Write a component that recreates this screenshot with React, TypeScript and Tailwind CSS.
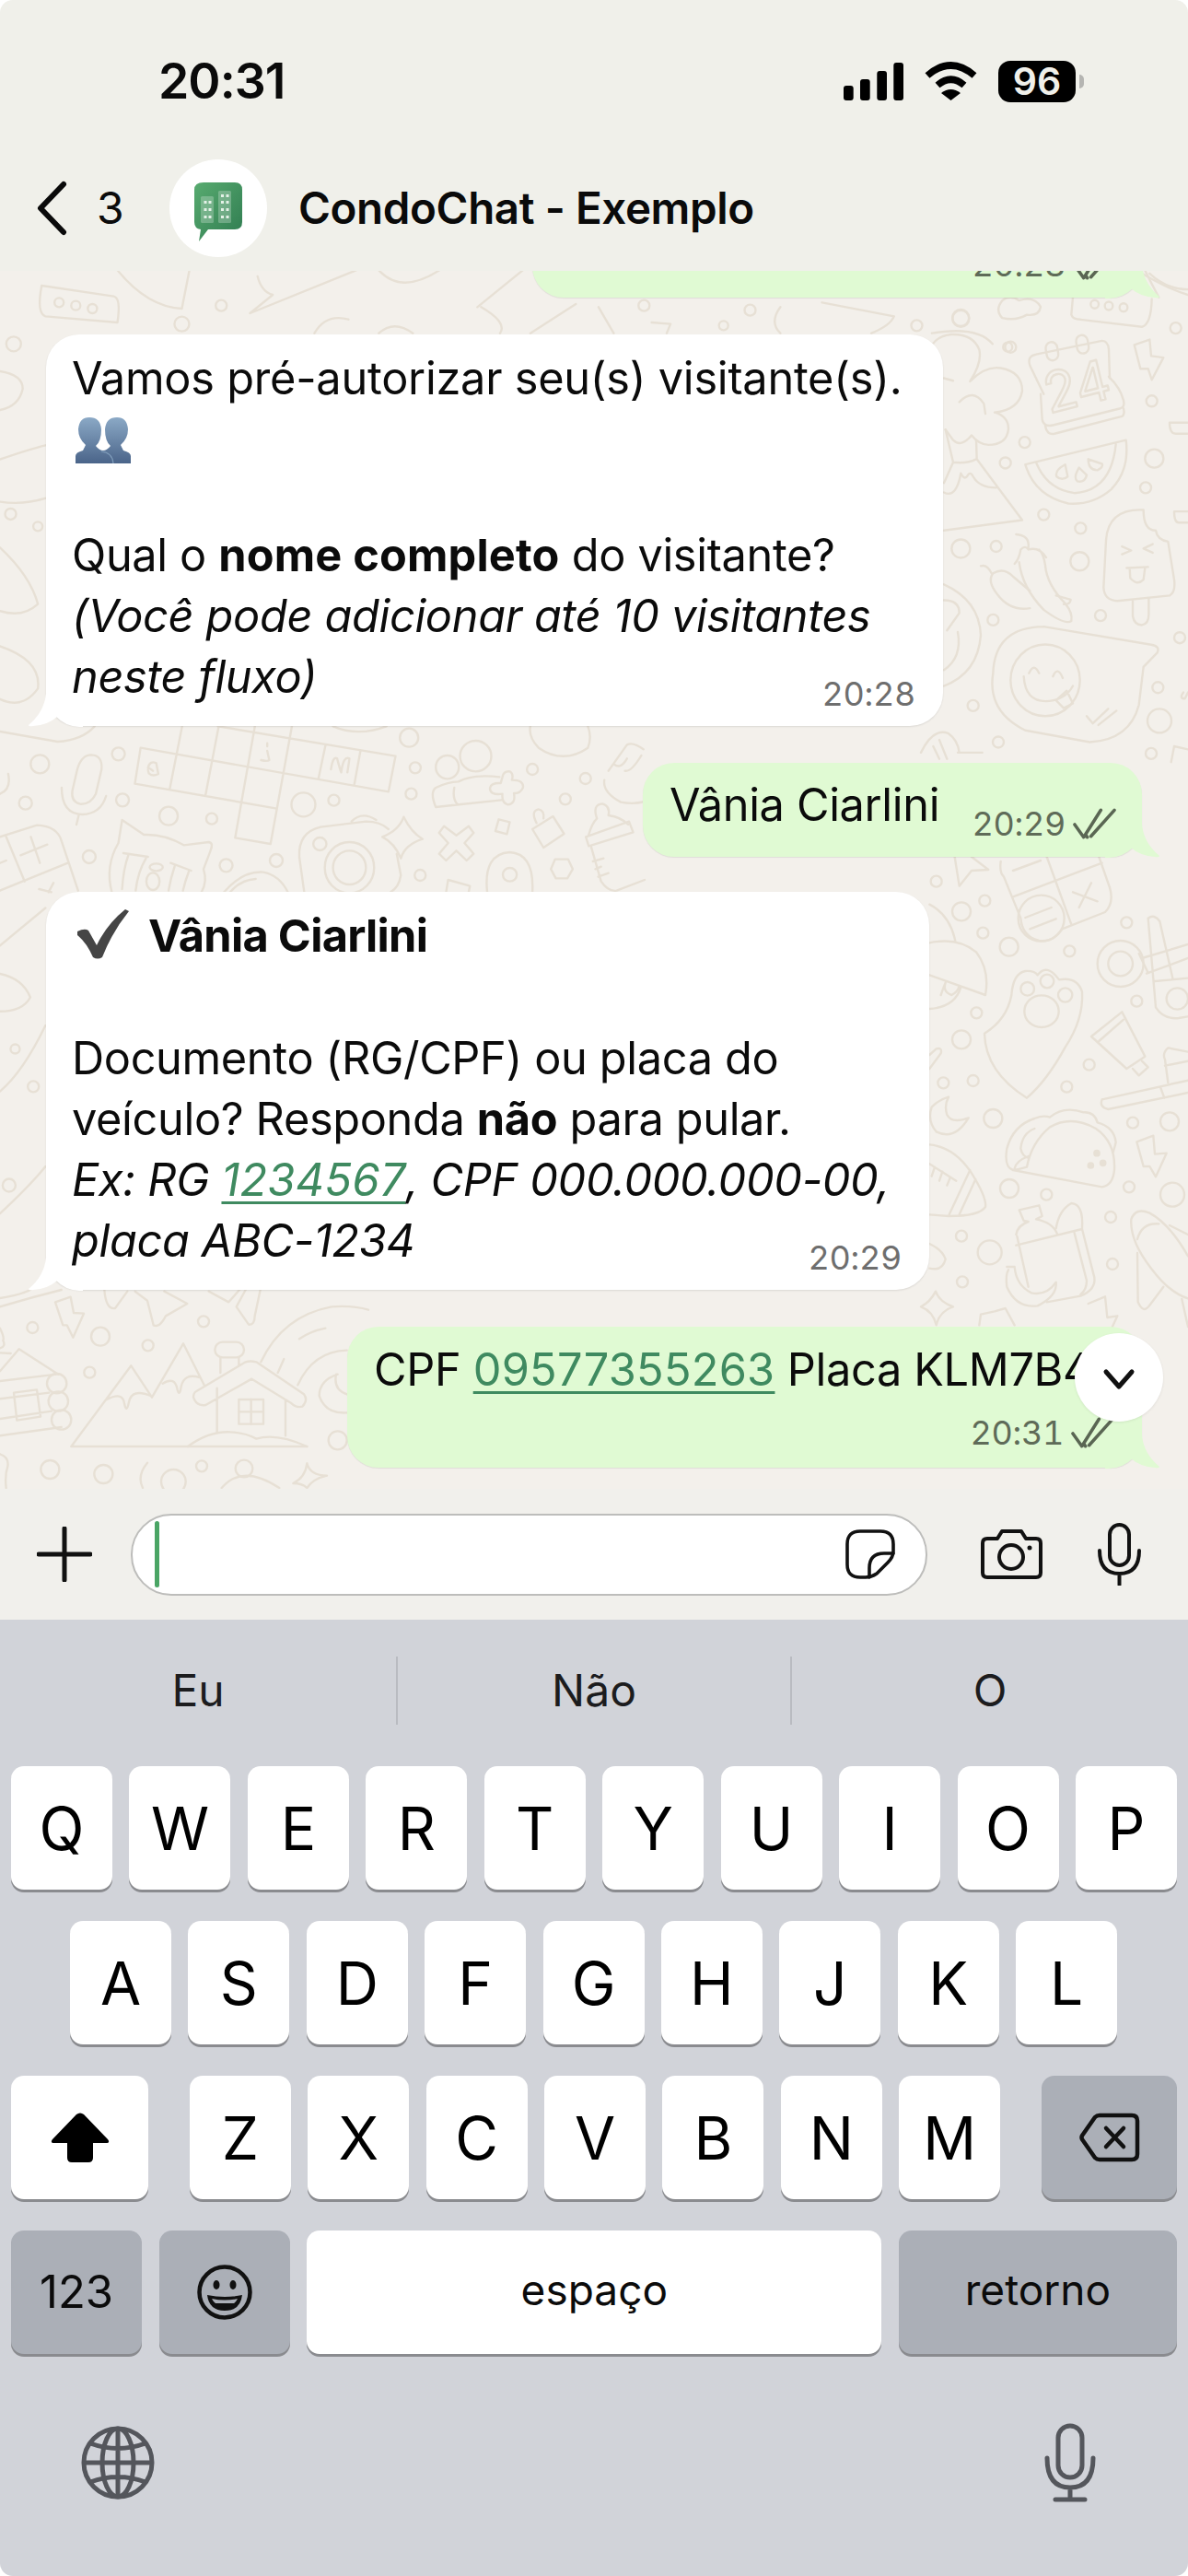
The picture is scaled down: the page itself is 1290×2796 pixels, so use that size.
import type { ReactNode } from "react";

type Dot = [number, number, number];

function Zone({
  ox,
  oy,
  sx,
  sy,
  dots = [],
  children,
}: {
  ox: number;
  oy: number;
  sx: number;
  sy: number;
  dots?: Dot[];
  children?: ReactNode;
}) {
  return (
    <>
      <g transform={`translate(${ox} ${oy}) scale(${1 / sx} ${1 / sy})`}>{children}</g>
      {dots.map(([x, y, r]) => (
        <circle key={`${ox}-${oy}-${x}-${y}`} cx={ox + x / sx} cy={oy + y / sy} r={r} />
      ))}
    </>
  );
}

function Doodles() {
  return (
    <svg
      viewBox="0 294 1290 1322"
      className="absolute inset-0 h-full w-full fill-none stroke-[#e7e0d5] stroke-[2.4] [&_*]:[vector-effect:non-scaling-stroke]"
      strokeLinecap="round"
      strokeLinejoin="round"
      aria-hidden="true"
    >
      {/* top strip */}
      <Zone ox={0} oy={0} sx={1.2155} sy={3} dots={[[78, 985, 5], [100, 995, 5], [122, 1005, 5], [292, 995, 6], [240, 1055, 8], [18, 1120, 8], [850, 995, 6], [990, 1010, 6], [1268, 1035, 9], [1210, 1060, 6], [955, 1060, 5], [1330, 1130, 5]]}>
        <path d="M55 930 L150 965 Q160 970 155 1050 L60 1030 Q48 1020 55 930" />
        <path d="M155 880 Q195 1000 240 1005 L250 880 M340 900 Q345 950 360 960 L330 1020 L470 880 M500 880 Q530 960 580 880" />
        <path d="M630 1000 L690 880 M635 1000 Q670 1050 660 1085 M700 1085 L760 990 M790 1000 L810 1085 M1030 1000 Q1015 1050 1030 1085 M1085 985 L1180 1030 Q1175 1060 1150 1085" />
        <path d="M415 1085 Q430 1020 460 1040 M500 1085 Q520 1040 545 1085 M860 1050 L885 1055 L880 1085 M1230 1085 Q1290 1060 1310 1120 M1500 880 Q1540 940 1568 960" />
      </Zone>

      {/* right of first bubble */}
      <Zone
        ox={1000}
        oy={290}
        sx={3}
        sy={2.904}
        dots={[[130, 162, 9], [292, 252, 6], [830, 192, 6], [338, 552, 6], [275, 617, 6], [752, 422, 6], [760, 603, 10], [732, 695, 6], [400, 780, 6], [520, 823, 6], [130, 887, 10], [245, 880, 6], [517, 927, 10], [585, 1098, 6], [235, 1112, 6], [843, 1168, 6], [772, 1325, 6], [777, 1430, 13], [170, 1382, 6], [252, 1497, 6], [750, 1533, 6]]}
      >
        <path d="M265 105 Q290 85 320 105 Q370 90 390 125 Q385 155 345 150 Q310 170 265 160 Q240 135 265 105" />
        <path d="M495 95 L490 150 Q495 165 520 165 L720 188 Q750 180 752 100" />
        <circle cx="566" cy="117" r="13" />
        <circle cx="612" cy="122" r="13" />
        <circle cx="660" cy="127" r="13" />
        <path d="M400 400 L355 310 Q345 280 375 275 L590 232 Q610 232 612 260 L615 350" />
        <path d="M390 400 L395 480 Q400 505 430 498 L650 445 Q665 440 660 420 Q650 380 612 345 M405 500 Q410 530 435 525 L655 470 Q665 465 660 445" />
        <rect x="408" y="236" width="38" height="58" rx="19" transform="rotate(-10 427 265)" />
        <rect x="507" y="214" width="38" height="58" rx="19" transform="rotate(-10 526 243)" />
        <text x="405" y="440" fontSize="175" fontFamily="Inter, sans-serif" transform="rotate(-14 500 400)">24</text>
        <path d="M695 245 L745 228 L750 280 L790 285 L752 355 L740 320 L715 320 Z" />
        <path d="M340 622 L668 545 Q680 640 620 700 Q560 750 480 745 Q370 720 340 622 Z M375 615 Q410 700 500 712 Q620 705 635 558" />
        <path d="M470 622 Q435 640 442 660 Q460 675 478 660 Z M515 632 Q495 665 510 675 Q535 680 540 655 Z M545 605 Q545 640 575 640 Q595 630 590 620 Z" />
        <path d="M725 765 Q610 760 603 860 L595 1010 Q597 1050 640 1052 L810 1035 Q830 1025 825 985 L805 865 Q770 860 765 830 Q725 830 725 765" />
        <path d="M690 1052 L690 1100 Q695 1128 720 1128 Q742 1125 742 1095 L742 1045 M655 880 L685 893 L655 905 M755 873 L725 887 L755 900 M670 948 L740 945 M680 950 L682 980 Q705 1005 725 985 L730 948" />
        <path d="M320 930 Q330 1010 400 1080 Q470 1130 490 1115 Q495 1090 470 1060 Q410 1000 405 940 Q400 905 385 890 M305 935 Q320 920 325 890 Q340 875 350 890 Q385 880 408 915 M350 885 Q355 845 310 842" />
        <path d="M355 1075 Q290 1085 248 1030 Q215 990 235 965 Q270 945 300 975 L355 1020 M230 965 Q215 935 195 942 M440 1035 L488 1048 Q485 1065 465 1062" />
        <path d="M400 1133 Q240 1135 235 1280 Q215 1400 340 1460 L550 1497 Q680 1490 710 1380 L725 1260 L770 1215 Q780 1195 750 1190 L400 1133" />
        <circle cx="405" cy="1302" r="113" />
        <path d="M335 1290 Q340 1370 410 1368 Q470 1365 495 1320 M352 1280 Q368 1245 385 1280 M430 1290 Q445 1255 462 1295 M440 1365 L475 1335 L495 1375 L465 1390 Z" />
        <path d="M540 1415 L560 1438 L610 1392 M578 1443 L637 1398" />
        <path d="M80 512 L105 615 L75 680 M180 545 L182 605 L330 797 L75 830 M105 615 Q150 620 180 605 M130 650 Q140 670 150 660 Q160 640 170 660 Q190 695 245 695 M75 710 Q115 730 130 650" />
        <path d="M160 360 Q200 300 190 260 Q170 210 100 212 Q60 215 40 240 M160 360 Q210 310 260 318 Q330 330 330 390 Q320 450 240 458 Q285 470 285 510 Q280 560 220 560 Q190 560 165 530 Q130 570 105 545 L80 512 M125 425 Q170 380 205 430 L210 462 M75 350 L105 358" />
        <path d="M75 1000 Q190 1050 195 1160 Q185 1280 75 1320 M75 1050 Q125 1050 125 1090 L85 1145 M120 1150 Q135 1230 75 1270" />
        <path d="M0 1530 Q40 1450 90 1470 Q120 1490 125 1530 M40 1510 L60 1550 M60 1490 L85 1550 M120 1530 L200 1530 M815 1560 L825 1510 L870 1520 M855 1340 Q840 1360 860 1360 L870 1340" />
        <path d="M810 490 Q810 525 830 525 L870 525 M810 490 L870 490 M825 770 Q825 805 840 805 L870 805 M825 770 L870 770 M730 10 Q750 50 775 95 M745 20 Q800 70 870 70" />
      </Zone>

      {/* band under first bubble */}
      <Zone
        ox={0}
        oy={780}
        sx={2.24}
        sy={3}
        dots={[[97, 148, 10], [288, 115, 7], [62, 275, 7], [298, 265, 7], [410, 317, 10], [515, 326, 6], [217, 450, 7], [550, 478, 7], [672, 462, 7], [995, 62, 10], [1010, 160, 6], [1000, 245, 6], [738, 280, 13], [812, 266, 6], [1295, 165, 6], [1424, 195, 6], [1375, 262, 6], [1022, 510, 6]]}
      >
        <path d="M530 25 L962 122 M342 95 L945 238 M328 212 L670 292 M572 388 L658 408 M342 95 L328 212 M443 25 L413 228 M532 25 L500 248 M620 25 L572 388 M710 25 L658 408 M792 85 L775 193 M877 103 L862 213 M962 122 L945 238" />
        <path d="M372 170 Q355 150 362 178 Q372 190 385 180 L380 145 Q365 135 360 160 M650 80 L650 90 M650 105 L655 135 Q650 140 635 135 M805 165 Q810 120 820 130 Q828 170 830 175 Q835 120 850 130 L845 175" />
        <path d="M188 165 Q198 118 222 118 Q250 120 247 165 L233 245 Q220 280 195 278 Q172 270 176 235 Z M150 225 Q150 310 200 312 Q245 310 258 252 M192 312 L186 345" />
        <path d="M288 405 L297 330 L350 378 Q400 375 447 412 L508 402 Q520 405 512 430 L495 490 Q505 530 490 565 M288 405 Q255 480 272 565 M300 438 L360 450 M415 470 L465 495 M312 445 Q300 490 297 555 M355 455 Q335 500 330 560 M425 480 Q415 520 410 560 M460 495 Q450 530 445 560" />
        <ellipse cx="372" cy="530" rx="16" ry="28" />
        <ellipse cx="380" cy="484" rx="16" ry="12" />
        <path d="M0 385 L90 347 Q140 350 150 400 L190 560 M15 385 L60 530 M0 560 L165 470 M50 445 L115 410 M75 385 L97 470 M95 555 L125 565 M130 535 L118 565 M0 470 L15 462" />
        <path d="M545 565 Q590 495 640 500 Q680 510 700 565 M560 565 Q585 525 622 522" />
        <path d="M740 565 L728 450 Q725 370 780 353 L890 335 Q925 335 945 360 M965 440 L975 510 Q970 550 950 565 M855 335 Q880 300 915 330" />
        <ellipse cx="850" cy="485" rx="60" ry="83" />
        <ellipse cx="850" cy="485" rx="40" ry="55" />
        <ellipse cx="778" cy="408" rx="16" ry="21" />
        <path d="M982 320 Q1000 370 1028 392 Q985 410 975 455 Q960 405 930 385 Q970 365 982 320 Z" />
        <path d="M1080 350 L1110 380 L1140 350 L1152 372 L1130 405 L1152 440 L1135 462 L1110 430 L1085 462 L1068 440 L1090 405 L1068 372 Z" />
        <path d="M1213 328 L1240 337 L1233 376 L1205 366 Z M1295 360 L1345 318 L1372 375 L1322 420 Z M1305 340 Q1290 300 1310 295 Q1325 300 1322 325" />
        <path d="M1425 385 L1530 335 L1540 370 L1432 415 Z M1432 378 Q1440 340 1452 325 Q1440 280 1465 277 Q1485 285 1480 315 Q1510 320 1528 345 M1438 418 L1462 530 Q1480 565 1500 560 L1568 525 M1442 465 L1468 455 M1448 490 L1462 482 M1455 515 L1480 503" />
        <path d="M1185 565 Q1175 440 1240 435 Q1300 440 1295 565 M1350 458 L1382 458 L1393 490 L1380 520 L1352 520 L1340 490 Z M1090 525 L1143 545 L1140 565 M1090 525 L1085 565" />
        <ellipse cx="1240" cy="508" rx="17" ry="22" />
        <ellipse cx="1088" cy="158" rx="28" ry="38" />
        <ellipse cx="1157" cy="122" rx="38" ry="50" />
        <path d="M1060 288 Q1045 240 1060 225 Q1090 205 1115 205 Q1150 180 1215 190 M1105 225 Q1100 260 1112 278 M1060 288 L1220 265 M1222 190 Q1225 170 1240 172 Q1250 180 1245 200 Q1275 200 1272 225 Q1265 245 1250 243 Q1255 278 1235 280 Q1220 275 1222 245 Q1190 250 1192 225 Q1195 208 1218 210 Z" />
        <path d="M1480 170 L1525 85 Q1540 75 1565 100 M1470 200 Q1465 240 1510 272 Q1540 280 1568 270 M1495 150 Q1510 165 1525 130 M1520 170 Q1535 175 1560 120 M1290 25 Q1285 60 1310 95 Q1370 150 1430 95 Q1440 60 1430 25 M0 42 L140 75 Q200 70 230 25 M20 180 Q28 230 0 245 M810 25 Q870 60 940 25" />
      </Zone>

      {/* right of second white bubble */}
      <Zone
        ox={1000}
        oy={930}
        sx={3}
        sy={3}
        dots={[[50, 80, 6], [132, 178, 10], [208, 143, 6], [202, 248, 6], [287, 293, 10], [484, 307, 6], [670, 214, 6], [703, 470, 6], [181, 508, 6], [132, 595, 10], [548, 677, 6], [475, 749, 6], [73, 736, 6], [170, 729, 6], [235, 852, 10], [690, 866, 6], [810, 862, 10], [288, 1080, 10], [409, 1100, 6], [678, 1075, 6], [819, 1100, 13], [618, 1173, 6], [132, 1235, 6], [224, 1288, 13], [135, 1384, 6], [624, 1326, 6]]}
      >
        <path d="M260 15 Q255 50 270 65 L325 200 Q330 260 385 273 Q430 280 460 235 L600 180 Q630 150 615 100 L580 0 M300 130 L590 20 M410 0 L490 220 M300 45 L390 12 M495 115 L575 145 M555 85 L515 165 M340 198 L425 165 M355 235 L440 202" />
        <circle cx="392" cy="200" r="75" />
        <path d="M110 0 L125 95 L165 45 L220 42 L165 0 M28 280 Q120 260 180 310 Q225 370 210 450 L28 385 M28 155 Q95 190 112 275 M28 495 Q110 490 130 425 M65 450 Q75 420 80 410 Q70 440 100 450 Q120 440 125 420" />
        <path d="M207 575 Q280 530 295 450 Q300 380 340 372 Q370 370 380 385 Q410 345 450 400 Q510 390 525 440 Q530 530 470 620 Q410 730 345 785 Q210 700 207 575 Z" />
        <circle cx="347" cy="430" r="22" />
        <circle cx="411" cy="405" r="22" />
        <circle cx="470" cy="450" r="23" />
        <ellipse cx="393" cy="503" rx="56" ry="52" />
        <circle cx="650" cy="348" r="75" />
        <circle cx="650" cy="348" r="40" />
        <circle cx="835" cy="462" r="35" />
        <path d="M710 315 L740 378 M720 330 L870 285 M735 380 L870 330 M740 200 Q760 185 778 210 L820 395 M740 200 L765 490 Q790 530 840 525 L870 520 M762 405 L870 395" />
        <path d="M555 585 L655 505 L730 650 L670 690 Z M580 600 L660 530 M690 690 L710 712 L740 685 L720 665" />
        <path d="M590 790 Q580 815 610 822 L870 768 M590 790 L870 728 M780 750 L793 785 M805 735 L795 660 Q785 640 805 622 L870 635 M795 680 L870 665" />
        <path d="M90 782 Q60 790 35 815 Q20 860 50 895 Q110 925 155 850 Q100 870 85 840 Q75 810 90 782 Z" />
        <path d="M300 1020 L590 1075 Q625 1070 630 1020 Q635 930 570 885 Q490 840 420 880 Q360 930 345 1010 Q310 1020 300 1020 M300 1020 Q270 1010 280 950 Q300 875 370 852 Q400 840 420 848 Q465 810 530 832 Q565 830 575 865 Q630 880 635 930 Q630 950 625 965 M370 885 Q330 900 325 950 Q330 975 350 980 M305 1015 Q310 990 350 975" />
        <circle cx="573" cy="965" r="8" className="fill-[#e7e0d5]" />
        <circle cx="553" cy="1005" r="8" className="fill-[#e7e0d5]" />
        <circle cx="593" cy="997" r="8" className="fill-[#e7e0d5]" />
        <path d="M703 928 L757 908 L762 968 L800 965 L765 1042 L745 1008 L725 1008 Z" />
        <path d="M28 937 Q110 945 165 1030 Q215 1110 210 1140 Q190 1170 90 1170 L28 1165 M160 1020 L92 1165 M178 1050 L125 1165 M28 1000 L115 1055 M45 1010 L35 1040 M70 1025 L60 1055 M95 1045 L85 1070" />
        <path d="M313 1235 L350 1400 M310 1265 L525 1212 L565 1370 Q570 1410 520 1430 L410 1450 M500 1225 L540 1380 Q540 1410 520 1425 M310 1230 Q315 1200 350 1188 L335 1185 L320 1150 L385 1135 L395 1170 L375 1180 Q430 1190 445 1230 M440 1210 Q450 1150 490 1128 Q530 1130 525 1210" />
        <path d="M280 1335 L305 1335 Q310 1395 360 1420 Q410 1430 440 1385 Q445 1430 380 1462 Q310 1470 280 1400 Q275 1360 285 1345" />
        <path d="M685 1180 Q700 1140 745 1160 Q810 1195 870 1300 M685 1180 Q680 1250 750 1340 Q810 1420 870 1438 M705 1245 Q720 1190 775 1195 M705 1290 L707 1450 Q725 1490 745 1460 L790 1400 M810 1200 L870 1230 M850 1440 L870 1530" />
        <path d="M48 1415 Q60 1450 105 1465 Q60 1480 50 1525 Q40 1480 0 1465 Q30 1450 48 1415 Z M545 1455 L600 1432 L607 1500 L640 1495 L610 1560 M190 1525 L195 1490 L240 1480 L275 1470 L305 1525 M28 690 L65 640 Q70 620 50 625 L28 645 M28 1260 Q70 1280 80 1310 Q70 1350 28 1340" />
      </Zone>

      {/* bottom left corner */}
      <Zone ox={0} oy={1395} sx={3} sy={3} dots={[[106, 138, 6], [327, 167, 10], [482, 196, 6], [292, 284, 6], [663, 118, 6], [163, 600, 10], [337, 615, 10], [657, 589, 6], [1100, 505, 10]]}>
        <path d="M232 525 L427 262 L495 365 L597 190 L665 325 M232 525 L1000 525 M348 372 Q400 345 405 385 Q412 420 420 380 Q430 335 490 360 M530 320 Q570 295 578 340 Q585 365 590 330 Q600 285 650 300" />
        <path d="M640 345 L800 250 Q815 245 835 250 L990 355 Q1005 375 985 395 Q965 400 950 385 L820 305 L670 390 Q640 395 630 365 Q630 350 640 345 Z M707 335 L707 480 M930 375 L930 490 M718 285 L718 235 M778 235 L778 262 M818 372 L818 452 M778 412 L858 412" />
        <rect x="778" y="372" width="80" height="80" />
        <rect x="700" y="185" width="95" height="50" rx="25" />
        <path d="M612 525 Q680 475 750 478 Q800 480 835 500 Q900 480 1000 525 M850 250 Q920 100 1080 70 Q1150 65 1200 80 M975 175 Q1010 150 1060 140 M905 285 L925 240 M970 325 Q1020 215 1130 212 M1100 290 Q1040 310 1040 360 Q1060 420 1130 415 M1095 290 Q1085 340 1130 355" />
        <path d="M0 280 L62 208 L190 290 M0 312 L185 290 M0 370 L160 350 M0 435 L168 410 M0 490 L200 462 M45 350 L120 340 L132 428 L55 440 Z M0 220 L35 222" />
        <circle cx="185" cy="320" r="32" />
        <circle cx="190" cy="378" r="32" />
        <circle cx="200" cy="438" r="32" />
        <circle cx="565" cy="640" r="40" />
        <circle cx="795" cy="597" r="28" />
        <path d="M480 578 Q445 620 465 660 M722 660 Q790 580 910 660 M1000 580 Q1010 620 1065 620 Q1020 630 1000 660 Q985 645 955 645 Q995 625 1000 580 M340 15 Q345 80 375 75 L415 20 M440 20 L480 50 L500 130 Q520 140 540 100 L610 60 L535 20" />
        <path d="M180 55 L230 38 L240 90 L273 92 L238 170 L218 130 L205 130 Z M800 15 L770 70 L810 128 Q830 130 830 100 L848 15 M680 20 L745 55 L780 15 M0 70 Q100 40 200 15 M0 140 Q15 170 10 180 Q20 200 0 205 M0 550 Q30 560 25 590 Q15 620 20 660" />
      </Zone>

      {/* left edge, first bubble and second bubble */}
      <Zone ox={0} oy={380} sx={1.2155} sy={2.613} dots={[[14, 465, 6], [50, 500, 5]]}>
        <path d="M0 310 Q40 280 60 270 M0 840 Q55 880 50 960 Q30 1020 0 990 M0 430 Q30 440 60 420 M0 560 Q40 640 50 720 Q30 760 0 740 M0 60 Q30 70 30 110 Q25 160 0 170" />
      </Zone>
      <Zone ox={0} oy={960} sx={1.2155} sy={1.96} dots={[[20, 350, 5], [44, 430, 6], [12, 640, 7]]}>
        <path d="M0 130 L60 50 M0 190 Q30 200 40 240 Q30 270 0 270 M0 440 Q30 400 60 300 M0 700 Q40 640 60 600 M0 880 Q40 870 50 850" />
      </Zone>
    </svg>
  );
}

function Tail({ white = false }: { white?: boolean }) {
  return (
    <svg
      viewBox="0 0 60 36"
      className={
        white
          ? "absolute -bottom-[1px] -left-[20px] h-[36px] w-[60px] -scale-x-100 fill-white"
          : "absolute -bottom-[1px] -right-[20px] h-[36px] w-[60px] fill-[#e0fad3]"
      }
    >
      <path d="M0 0 H40 Q42 20 59 34 Q59 36 54 35 Q38 34 28 25 Q20 35 4 36 H0 Z" />
    </svg>
  );
}

function Ticks() {
  return (
    <svg viewBox="0 0 48 36" className="mb-[3px] ml-[8px] h-[36px] w-[47px] fill-none stroke-[#5a6653] stroke-[3.6]" strokeLinecap="round" strokeLinejoin="round">
      <path d="M2 19 L12 33 L31 3 M20 32 L46 3 M14 30 L16 33" />
    </svg>
  );
}

function Stamp({ children, ticks = false }: { children: string; ticks?: boolean }) {
  return (
    <div className="flex shrink-0 items-end">
      <span className={ticks ? "text-[36px] leading-[42px] tracking-[-0.3px] text-[#5f6b58] tabular-nums" : "text-[36px] leading-[42px] tracking-[-0.3px] text-[#6e6e6e] tabular-nums"}>
        {children}
      </span>
      {ticks && <Ticks />}
    </div>
  );
}

function Link({ children }: { children: string }) {
  return <span className="tracking-[0.25px] text-[#3f8a60] underline decoration-[2.5px] underline-offset-[6px]">{children}</span>;
}

function Visitors() {
  return (
    <svg viewBox="0 0 60 50" className="h-[50px] w-[60px] translate-x-[4px] translate-y-[10px]">
      <defs>
        <linearGradient id="bust" x1="0" y1="0" x2="0" y2="1">
          <stop offset="0" stopColor="#8ba9c6" />
          <stop offset="1" stopColor="#4a6489" />
        </linearGradient>
      </defs>
      <path
        fill="url(#bust)"
        d="M0 50 V42 Q0 38 8 36 L11 30 Q3 23 3 13 Q4 0 15 0 Q27 0 28 13 Q28 26 22 31 Q26 36 30 36 Q34 36 38 31 Q32 26 32 13 Q33 0 45 0 Q56 0 57 13 Q57 23 49 30 L52 36 Q60 38 60 42 V50 Z"
      />
      <path d="M28 37 Q40 38 41 50" fill="none" stroke="#7f9cba" strokeWidth="1.2" />
    </svg>
  );
}

function Check() {
  return (
    <svg viewBox="0 0 56 54" className="h-[54px] w-[56px] shrink-0 translate-y-[-2px] fill-[#454545]">
      <path d="M0 24 Q8 20 12 23 L21 39 Q32 16 52 0 L56 2 Q38 24 27 52 Q22 55 17 52 Q10 36 0 28 Z" />
    </svg>
  );
}

function Key({ label, className = "" }: { label: string; className?: string }) {
  return (
    <div className={`flex h-[134px] w-[110px] items-center justify-center rounded-[14px] bg-white pt-[1px] text-[64px] font-normal text-black shadow-[0_3px_0_#8a8b8f] ${className}`}>
      {label}
    </div>
  );
}

function Logo() {
  return (
    <svg viewBox="0 0 54 66" className="h-[66px] w-[54px]">
      <defs>
        <linearGradient id="logo" x1="0" y1="0" x2="1" y2="1">
          <stop offset="0" stopColor="#58ab70" />
          <stop offset="1" stopColor="#2f7b50" />
        </linearGradient>
      </defs>
      <path fill="url(#logo)" d="M10 0 H44 Q52 0 52 8 V43 Q52 51 44 51 H15 L5 64 L7 51 Q0 50 0 43 V8 Q0 0 10 0 Z" />
      <rect x="7" y="15" width="14" height="29" rx="1.5" fill="#fff" opacity="0.25" />
      <rect x="26" y="9" width="14" height="35" rx="1.5" fill="#fff" opacity="0.25" />
      {[20, 28, 36].map((y) => (
        <g key={y} fill="#e4f1e7">
          <rect x="10.5" y={y} width="3" height="3" />
          <rect x="15.5" y={y} width="3" height="3" />
        </g>
      ))}
      {[13, 20, 28, 36].map((y) => (
        <g key={y} fill="#e4f1e7">
          <rect x="29" y={y} width="3" height="3" />
          <rect x="34.5" y={y} width="3" height="3" />
        </g>
      ))}
    </svg>
  );
}

export default function App() {
  return (
    <div className="flex h-[2796px] w-[1290px] flex-col overflow-hidden rounded-[14px] bg-white font-['Inter',sans-serif] text-[#0b0b0b]">
      {/* header */}
      <header className="shrink-0 bg-[#f0f0ea]">
        <div className="flex h-[173px] items-center justify-between pl-[172px] pr-[113px] pt-[3px]">
          <span className="text-[53.5px] font-semibold tracking-[-1px] text-[#0a0a0a]">20:31</span>
          <div className="flex items-center">
            <svg viewBox="0 0 65 41" className="h-[41px] w-[65px] fill-black">
              <rect x="0" y="25" width="10.7" height="16" rx="3" />
              <rect x="18" y="18" width="10.7" height="23" rx="3" />
              <rect x="36.3" y="9" width="10.7" height="32" rx="3" />
              <rect x="54.3" y="0" width="10.7" height="41" rx="3" />
            </svg>
            <svg viewBox="0 0 57 42" className="ml-[23px] h-[42px] w-[57px]">
              <path d="M3 15 Q28.5 -7 54 15 M14 25.5 Q28.5 13 43 25.5" fill="none" stroke="#000" strokeWidth="7.5" strokeLinecap="butt" />
              <path d="M18 34 Q28.5 26 39 34 L28.5 42 Z" fill="#000" />
            </svg>
            <div className="ml-[23px] flex h-[45px] w-[84px] items-center justify-center rounded-[13px] bg-black text-[41px] font-semibold leading-none text-[#f0f0ea]">
              96
            </div>
            <div className="ml-[4px] h-[15px] w-[5px] rounded-r-full bg-[#b5b5b2]" />
          </div>
        </div>
        <div className="flex h-[106px] items-center pl-[38px]">
          <svg viewBox="0 0 36 60" className="h-[60px] w-[36px] fill-none stroke-[#0a0a0a] stroke-[6]" strokeLinecap="round" strokeLinejoin="round">
            <path d="M31 4 L6 30 L31 56" />
          </svg>
          <span className="ml-[31px] w-[28px] text-[48px] font-normal leading-none">3</span>
          <div className="ml-[51px] flex h-[106px] w-[106px] items-center justify-center rounded-full bg-white pl-[1px] pt-[10px]">
            <Logo />
          </div>
          <h1 className="ml-[34px] text-[47.5px] font-semibold leading-none tracking-[-0.4px] text-[#0a0a0a]">CondoChat - Exemplo</h1>
        </div>
        <div className="h-[15px]" />
      </header>

      {/* conversation */}
      <main className="relative flex h-[1322px] shrink-0 flex-col justify-end overflow-hidden bg-[#f3f0eb] pb-[23px] text-[48.7px] leading-[65px] tracking-[-0.35px]">
        <Doodles />

        <div className="relative ml-[578px] h-[120px] w-[662px] shrink-0 rounded-[34px] bg-[#e0fad3] shadow-[0_1px_1px_rgba(0,0,0,0.08)]">
          <Tail />
          <div className="absolute bottom-[15px] right-[28px]">
            <Stamp ticks>20:28</Stamp>
          </div>
        </div>

        <div className="relative z-10 ml-[50px] mt-[40px] w-[974px] shrink-0 rounded-[36px] bg-white pb-[21px] pl-[28px] pr-[30px] pt-[15px] shadow-[0_1px_2px_rgba(0,0,0,0.1)]">
          <Tail white />
          <div className="relative flex items-end justify-between">
            <div>
              <p className="h-[65px] whitespace-nowrap tracking-[-0.25px]">Vamos pré-autorizar seu(s) visitante(s).</p>
              <div className="h-[65px]">
                <Visitors />
              </div>
              <div className="h-[62px]" />
              <p className="h-[66px]">
                Qual o <b className="font-bold tracking-[0.15px]">nome completo</b> do visitante?
              </p>
              <p className="h-[66px] italic">(Você pode adicionar até 10 visitantes</p>
              <p className="italic">neste fluxo)</p>
            </div>
            <div className="absolute bottom-[-7px] right-0">
              <Stamp>20:28</Stamp>
            </div>
          </div>
        </div>

        <div className="relative z-10 ml-[698px] mt-[40px] flex h-[102px] w-[542px] shrink-0 items-start justify-between rounded-[34px] bg-[#e0fad3] pl-[29px] pr-[28px] pt-[13px] shadow-[0_1px_1px_rgba(0,0,0,0.08)]">
          <Tail />
          <p className="relative">Vânia Ciarlini</p>
          <div className="relative mt-[32px]">
            <Stamp ticks>20:29</Stamp>
          </div>
        </div>

        <div className="relative z-10 ml-[50px] mt-[38px] w-[959px] shrink-0 rounded-[36px] bg-white pb-[20px] pl-[28px] pr-[30px] pt-[13px] shadow-[0_1px_2px_rgba(0,0,0,0.1)]">
          <Tail white />
          <div className="relative">
            <div className="flex h-[69px] items-center pl-[6px]">
              <Check />
              <b className="ml-[21px] font-bold tracking-[-0.7px]">Vânia Ciarlini</b>
            </div>
            <div className="h-[66px]" />
            <div className="leading-[66px]">
              <p>Documento (RG/CPF) ou placa do</p>
              <p>
                veículo? Responda <b className="font-bold">não</b> para pular.
              </p>
              <p className="italic whitespace-nowrap">
                Ex: RG <Link>1234567</Link>, CPF 000.000.000-00,
              </p>
              <p className="italic">placa ABC-1234</p>
            </div>
            <div className="absolute bottom-[-6px] right-0">
              <Stamp>20:29</Stamp>
            </div>
          </div>
        </div>

        <div className="relative z-10 ml-[377px] mt-[40px] h-[153px] w-[863px] shrink-0 rounded-[34px] bg-[#e0fad3] pl-[29px] pr-[30px] pt-[14px] shadow-[0_1px_1px_rgba(0,0,0,0.08)]">
          <Tail />
          <p className="relative whitespace-nowrap">
            CPF <Link>09577355263</Link> Placa KLM7B4
          </p>
          <div className="relative mt-[15px] flex justify-end">
            <Stamp ticks>20:31</Stamp>
          </div>
          <div className="absolute right-[-23px] top-[7px] flex h-[96px] w-[96px] items-center justify-center rounded-full bg-white shadow-[0_1px_3px_rgba(0,0,0,0.08)]">
            <svg viewBox="0 0 36 24" className="mt-[4px] h-[24px] w-[36px] fill-none stroke-[#111] stroke-[5]" strokeLinecap="round" strokeLinejoin="round">
              <path d="M4 4 L18 20 L32 4" />
            </svg>
          </div>
        </div>
      </main>

      {/* input bar */}
      <div className="flex h-[142px] shrink-0 items-center bg-[#f1f0ec] pl-[40px]">
        <svg viewBox="0 0 60 60" className="h-[60px] w-[60px] fill-none stroke-[#111] stroke-[5]" strokeLinecap="round">
          <path d="M30 2 V58 M2 30 H58" />
        </svg>
        <div className="ml-[42px] flex h-[89px] w-[865px] items-center rounded-[44px] border-2 border-[#bdbdbb] bg-white pl-[24px] pr-[33px]">
          <div className="h-[72px] w-[5px] rounded-full bg-[#4aa565]" />
          <svg viewBox="0 0 54 54" className="ml-auto h-[54px] w-[54px] fill-none stroke-[#111] stroke-[3.6]" strokeLinejoin="round" strokeLinecap="round">
            <path d="M16 2 H38 Q52 2 52 16 V24 Q52 30 46 36 L34 48 Q28 52 22 52 H16 Q2 52 2 38 V16 Q2 2 16 2 Z" />
            <path d="M26 52 V42 Q26 26 42 26 H52" />
          </svg>
        </div>
        <svg viewBox="0 0 67 54" className="ml-[58px] h-[54px] w-[67px] fill-none stroke-[#111] stroke-[4]" strokeLinejoin="round">
          <path d="M7 10 H18 L23 2 H44 L49 10 H60 Q65 10 65 15 V47 Q65 52 60 52 H7 Q2 52 2 47 V15 Q2 10 7 10 Z" />
          <circle cx="33" cy="30" r="13" />
          <circle cx="53" cy="20" r="2.5" className="fill-[#111] stroke-none" />
        </svg>
        <svg viewBox="0 0 47 68" className="ml-[60px] h-[68px] w-[47px] fill-none stroke-[#111] stroke-[4]" strokeLinecap="round">
          <rect x="13" y="2" width="21" height="44" rx="10.5" />
          <path d="M2 30 Q2 55 23.5 55 Q45 55 45 30 M23.5 55 V67" />
        </svg>
      </div>

      {/* keyboard */}
      <div className="flex min-h-0 flex-1 flex-col bg-[#d1d3d9]">
        <div className="mt-[40px] grid h-[74px] grid-cols-3 text-[48px] font-normal text-[#1c1c1e]">
          <div className="flex items-center justify-center">Eu</div>
          <div className="flex items-center justify-center border-x-2 border-[#b9bbc1]">Não</div>
          <div className="flex items-center justify-center">O</div>
        </div>

        <div className="mt-[45px] flex justify-between px-[12px]">
          {"QWERTYUIOP".split("").map((k) => (
            <Key key={k} label={k} />
          ))}
        </div>
        <div className="mt-[34px] flex justify-between pl-[76px] pr-[77px]">
          {"ASDFGHJKL".split("").map((k) => (
            <Key key={k} label={k} />
          ))}
        </div>
        <div className="mt-[34px] flex justify-between px-[12px]">
          <div className="flex h-[134px] w-[149px] items-center justify-center rounded-[14px] bg-white shadow-[0_3px_0_#8a8b8f]">
            <svg viewBox="0 0 64 54" className="h-[54px] w-[64px] fill-black">
              <path d="M28 2 Q32 -1 36 2 L62 29 Q65 33 60 33 H46 V49 Q46 54 41 54 H23 Q18 54 18 49 V33 H4 Q-1 33 2 29 Z" />
            </svg>
          </div>
          <div className="flex gap-[18.4px]">
            {"ZXCVBNM".split("").map((k) => (
              <Key key={k} label={k} />
            ))}
          </div>
          <div className="flex h-[134px] w-[147px] items-center justify-center rounded-[14px] bg-[#abafb7] shadow-[0_3px_0_#8a8b8f]">
            <svg viewBox="0 0 66 54" className="h-[54px] w-[66px] fill-none stroke-[#111] stroke-[4.5]" strokeLinecap="round" strokeLinejoin="round">
              <path d="M22 3 H57 Q63 3 63 9 V45 Q63 51 57 51 H22 Q19 51 17 49 L3 29 Q2 27 3 25 L17 5 Q19 3 22 3 Z" />
              <path d="M29 17 L48 37 M48 17 L29 37" />
            </svg>
          </div>
        </div>
        <div className="mt-[34px] flex justify-between px-[12px] text-[46px] font-normal text-[#0b0b0b]">
          <div className="flex h-[134px] w-[142px] items-center justify-center rounded-[14px] bg-[#abafb7] text-[49px] shadow-[0_3px_0_#8a8b8f]">123</div>
          <div className="flex h-[134px] w-[142px] items-center justify-center rounded-[14px] bg-[#abafb7] shadow-[0_3px_0_#8a8b8f]">
            <svg viewBox="0 0 60 60" className="h-[60px] w-[60px]">
              <circle cx="30" cy="30" r="27.5" fill="none" stroke="#111" strokeWidth="4.5" />
              <ellipse cx="21" cy="22" rx="3.5" ry="5" fill="#111" />
              <ellipse cx="39" cy="22" rx="3.5" ry="5" fill="#111" />
              <path d="M11 33 Q30 37 49 33 Q47 50 30 50 Q13 50 11 33 Z" fill="#111" />
              <path d="M16 37 Q30 40 44 37 Q42 41 40 42 H20 Q18 41 16 37 Z" fill="#abafb7" />
            </svg>
          </div>
          <div className="flex h-[134px] w-[624px] items-center justify-center rounded-[14px] bg-white pb-[5px] shadow-[0_3px_0_#8a8b8f]">espaço</div>
          <div className="flex h-[134px] w-[302px] items-center justify-center rounded-[14px] bg-[#abafb7] pb-[5px] shadow-[0_3px_0_#8a8b8f]">retorno</div>
        </div>

        <div className="mt-[75px] flex items-center justify-between pl-[88px] pr-[100px]">
          <svg viewBox="0 0 80 80" className="h-[80px] w-[80px] fill-none stroke-[#54565c] stroke-[5]">
            <circle cx="40" cy="40" r="37" />
            <ellipse cx="40" cy="40" rx="17" ry="37" />
            <path d="M40 3 V77 M3 40 H77 M10 19 Q40 30 70 19 M10 61 Q40 50 70 61" />
          </svg>
          <svg viewBox="0 0 56 86" className="h-[86px] w-[56px] fill-none stroke-[#54565c] stroke-[5]" strokeLinecap="round">
            <rect x="15" y="3" width="26" height="56" rx="13" />
            <path d="M3 38 Q3 70 28 70 Q53 70 53 38 M28 70 V83 M12 83 H44" />
          </svg>
        </div>
      </div>
    </div>
  );
}
